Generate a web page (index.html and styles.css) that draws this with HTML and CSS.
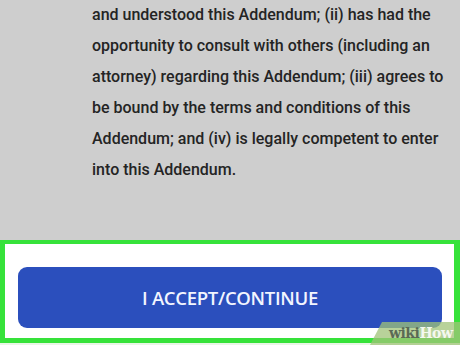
FILE: index.html
```html
<!DOCTYPE html>
<html>
<head>
<meta charset="utf-8">
<link rel="stylesheet" href="styles.css">
</head>
<body>
<div class="page">
  <div class="doc">
    <div class="line">and understood this Addendum; (ii) has had the</div>
    <div class="line">opportunity to consult with others (including an</div>
    <div class="line">attorney) regarding this Addendum; (iii) agrees to</div>
    <div class="line">be bound by the terms and conditions of this</div>
    <div class="line">Addendum; and (iv) is legally competent to enter</div>
    <div class="line">into this Addendum.</div>
  </div>
  <div class="footer">
    <div class="btn">I ACCEPT/CONTINUE</div>
  </div>
  <div class="wm"><span class="wm-shape"></span><span class="wm-text"><span class="wiki">wiki</span><span class="how">How</span></span></div>
</div>
</body>
</html>
```

FILE: styles.css
```css
html, body {
  margin: 0;
  padding: 0;
}
body {
  width: 460px;
  height: 345px;
  overflow: hidden;
  background: #e9f5e6;
}
.page {
  position: relative;
  width: 460px;
  height: 345px;
  display: flex;
  flex-direction: column;
}
.doc {
  height: 240px;
  background: #cecece;
  box-sizing: border-box;
  padding: 0 0 0 92px;
  font-family: Roboto, "Noto Sans", sans-serif;
  font-weight: 500;
  font-size: 16px;
  letter-spacing: 0;
  line-height: 31px;
  color: #242424;
}
.line {
  white-space: nowrap;
  position: relative;
  top: -1px;
}
.footer {
  height: 103px;
  width: 460px;
  box-sizing: border-box;
  border: 5px solid #36e23a;
  border-top-width: 4px;
  border-right-width: 6px;
  background: #ffffff;
  padding: 23px 12px 10px 13px;
  display: flex;
}
.btn {
  flex: 1;
  height: 61px;
  background: #2b4fbd;
  border-radius: 9px;
  color: #f2f5ff;
  font-family: "Open Sans", "Noto Sans", sans-serif;
  font-weight: 600;
  font-size: 18.5px;
  display: flex;
  align-items: center;
  justify-content: center;
  letter-spacing: -0.3px;
}
.wm {
  position: absolute;
  right: 0;
  bottom: 0;
  width: 90px;
  height: 23px;
}
.wm-shape {
  position: absolute;
  left: 0;
  top: 0;
  width: 100%;
  height: 100%;
  background: rgba(160, 195, 120, 0.75);
  clip-path: polygon(12px 0, 100% 0, 100% 100%, 0 100%);
}
.wm-text {
  position: absolute;
  left: 19px;
  top: 3px;
  font-family: "DejaVu Serif", "Liberation Serif", serif;
  font-weight: bold;
  font-size: 14px;
  line-height: 16px;
  letter-spacing: -0.5px;
}
.wiki {
  color: #5a6a55;
}
.how {
  color: #f4f8ef;
}
```
